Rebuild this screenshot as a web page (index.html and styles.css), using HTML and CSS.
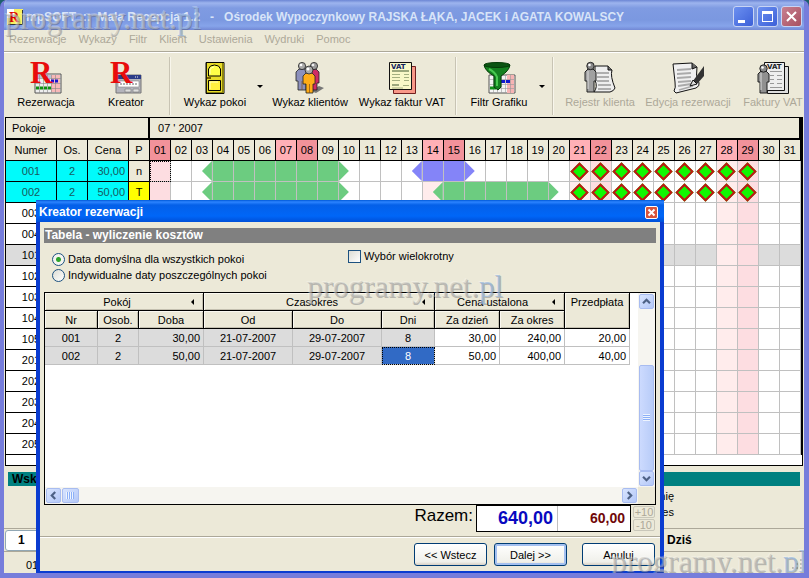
FILE: index.html
```html
<!DOCTYPE html>
<html lang="pl">
<head>
<meta charset="utf-8">
<title>mpSOFT :: Mała Recepcja 1.2</title>
<link rel="stylesheet" href="styles.css">
</head>
<body>
<div class="window">
  <header class="titlebar">
    <svg class="app-icon" viewBox="0 0 16 16" aria-hidden="true"><path d="M0 0h16v16H0z" fill="#f8f060"/><path d="M0 0h7v9H0z" fill="#fff"/><path d="M1 15.500h14.500V1" fill="none" stroke="#333"/><text x="2" y="13" class="r-small">R</text></svg>
    <h1>mpSOFT &nbsp;:: &nbsp;Mała Recepcja 1.2 &nbsp;&nbsp;- &nbsp;&nbsp;Ośrodek Wypoczynkowy RAJSKA ŁĄKA, JACEK i AGATA KOWALSCY</h1>
    <div class="window-buttons">
      <button type="button" aria-label="Minimalizuj"><svg viewBox="0 0 19 19"><path d="M4 13h7v3H4z" fill="#fff"/></svg></button>
      <button type="button" aria-label="Maksymalizuj"><svg viewBox="0 0 19 19"><path d="M4 4h11v11H4zM5 7v7h9V7z" fill="#fff" fill-rule="evenodd"/></svg></button>
      <button type="button" class="close" aria-label="Zamknij"><svg viewBox="0 0 19 19"><path d="M5 5l9 9M14 5l-9 9" stroke="#fff" stroke-width="2"/></svg></button>
    </div>
  </header>

  <nav class="menu">
    <a href="#">Rezerwacje</a><a href="#">Wykazy</a><a href="#">Filtr</a><a href="#">Klient</a><a href="#">Ustawienia</a><a href="#">Wydruki</a><a href="#">Pomoc</a>
  </nav>

  <div class="toolbar">
    <button type="button" class="tool w80">
      <svg viewBox="0 0 32 32"><path d="M5 12h26v19H5z" fill="#eee" stroke="#555"/><path d="M6 13h24v3H6z" fill="#b8c4d8"/><path d="M21 13h9v17h-9z" fill="#f8b8b8"/><path d="M5 16.500h26M5 21.500h26M5 26.500h26M9.500 13v18M13.500 13v18M17.500 13v18M21.500 13v18M25.500 13v18" stroke="#888" stroke-width=".6"/><path d="M17 19h11" stroke="#1414d0" stroke-width="3" stroke-dasharray="3 1"/><path d="M6 26h15" stroke="#109010" stroke-width="3" stroke-dasharray="3 1"/><text x="0" y="21" class="r-big">R</text></svg>
      <span>Rezerwacja</span></button>
    <button type="button" class="tool w80">
      <svg viewBox="0 0 32 32"><path d="M6 13h25v18H6z" fill="#b4b4bc" stroke="#777"/><path d="M6 13h25v4H6z" fill="#2c3c88"/><path d="M8 19h21v6H8z" fill="#fff" stroke="#888" stroke-width=".6"/><path d="M10 22h17" stroke="#666" stroke-dasharray="2 1"/><path d="M15 27h6v3h-6zM23 27h6v3h-6z" fill="#ddd" stroke="#777" stroke-width=".6"/><path d="M25 15h4" stroke="#f2f2f2" stroke-dasharray="1 1"/><text x="0" y="21" class="r-big">R</text></svg>
      <span>Kreator</span></button>
    <i class="split w8"></i>
    <button type="button" class="tool w82">
      <svg viewBox="0 0 32 32"><path d="M7 .500h18v31H7z" fill="#403c08" stroke="#000"/><path d="M8 1h15v29H8z" fill="#e8dc28"/><path d="M23 1h2v30H8v-1h15z" fill="#8c8410"/><path d="M9.500 14V7q1-4 6-4t6 4v7z" fill="#ffff48" stroke="#000"/><path d="M9.500 18.500h12v10h-12z" fill="#fff040" stroke="#000"/><path d="M11 12V8q1-3 4-3M11 27v-7h8" fill="none" stroke="#ffffc0"/><path d="M8 15h4v2H8z" fill="#745c00"/></svg>
      <span>Wykaz pokoi</span></button>
    <button type="button" class="drop w8" aria-label="Więcej: Wykaz pokoi"></button>
    <button type="button" class="tool w92">
      <svg viewBox="0 0 32 32"><path d="M17 29l8-5 5 2-8 5z" fill="#777"/><g stroke="#222" stroke-width=".8"><path d="M2 10l3-3h6l3 3v9h-2v9H4v-9H2z" fill="#8c90bc"/><path d="M15 10l3-3h4l3 3v11h-2v7h-7z" fill="#d02c64"/><path d="M9 14l3-3h6l3 3v8h-2v9h-7v-9H9z" fill="#ffac18"/><circle cx="8" cy="4" r="3.600" fill="#aaa"/><circle cx="20" cy="4" r="3.600" fill="#999"/><circle cx="15" cy="8" r="4" fill="#aaa"/></g><path d="M15.500 22v9M8 19v9" stroke="#805020" stroke-width=".7"/><circle cx="7" cy="3" r="1.300" fill="#fff"/><circle cx="19" cy="3" r="1.300" fill="#eee"/><circle cx="14" cy="7" r="1.500" fill="#fff"/></svg>
      <span>Wykaz klientów</span></button>
    <button type="button" class="tool w92">
      <svg viewBox="0 0 32 32"><path d="M7.500 4.500h22v27h-22z" fill="#f89888" stroke="#702020"/><path d="M3.500.500h22v27h-22z" fill="#f8f8c8" stroke="#111"/><text x="5" y="7" class="vat">VAT</text><path d="M6 9h17M6 23h7" stroke="#9ca87c" stroke-width="2"/><path d="M6 12.500h8M6 15.500h8M6 18.500h8M18 12.500h5M18 15.500h5M18 18.500h5M17 23.500h6M6 26h11" stroke="#a4b080"/></svg>
      <span>Wykaz faktur VAT</span></button>
    <i class="split w16"></i>
    <button type="button" class="tool w70">
      <svg viewBox="0 0 32 32"><path d="M6 13h26v18H6z" fill="#f4f4f4" stroke="#555"/><path d="M24 13h7v18h-7z" fill="#f8b4b4"/><path d="M6 17.500h25M6 22.500h25M6 26.500h25M10.500 13v18M14.500 13v18M18.500 13v18M22.500 13v18M27.500 13v18" stroke="#999" stroke-width=".6"/><path d="M18 19.500h10" stroke="#1018d0" stroke-width="3" stroke-dasharray="4 1"/><path d="M7 26h6" stroke="#109018" stroke-width="3"/><path d="M1 3q13 4 26 0-1 6-9 11v11l-3 3-4-3V14Q2 9 1 3z" fill="#148020" stroke="#053c08"/><ellipse cx="14" cy="3" rx="13" ry="2.500" fill="#0b5412" stroke="#053c08"/><path d="M6 7q6 3 8 8v9" fill="none" stroke="#48c850" stroke-width="2"/></svg>
      <span>Filtr Grafiku</span></button>
    <button type="button" class="drop w16" aria-label="Więcej: Filtr Grafiku"></button>
    <i class="split w6"></i>
    <button type="button" class="tool w88" disabled>
      <svg viewBox="0 0 32 32"><path d="M11 4h13l4 4q-2 6 3 18-1 3-5 4H10q4-5 1-12z" fill="#eee" stroke="#111"/><path d="M24 4v4h4" fill="#777" stroke="#111"/><path d="M13 11h12M13 15h12M13 19h12M14 23h13M14 27h13" stroke="#999" stroke-width="1.500"/><path d="M1 10l3-3h5l3 3v9h-2v11H3V19H1z" fill="#a0a0a0" stroke="#222"/><path d="M4 9v18" stroke="#ddd"/><circle cx="6.500" cy="4" r="3.700" fill="#888" stroke="#222"/><circle cx="5.500" cy="3" r="1.300" fill="#fff"/></svg>
      <span>Rejestr klienta</span></button>
    <button type="button" class="tool w88" disabled>
      <svg viewBox="0 0 32 32"><path d="M1 2l19-1 5 4q-2 9 2 16 1 3-3 5L4 31l-2-2q2-3 1-9z" fill="#f0f0f0" stroke="#111"/><path d="M20 1v6l5-2" fill="#666" stroke="#111"/><path d="M5 8l14-1M5 12l14-1M5 16l14-1M6 20l13-1M6 24l13-2M7 28l14-4" stroke="#aaa" stroke-width="1.800"/><path d="M32 4v10l-7 8-4-3z" fill="#333"/><path d="M21 18l4 4-7 2z" fill="#ddd" stroke="#111"/></svg>
      <span>Edycja rezerwacji</span></button>
    <button type="button" class="tool w82" disabled>
      <svg viewBox="0 0 32 32"><path d="M10.500 4.500h21v27h-21z" fill="#ddd" stroke="#111"/><path d="M7.500.500h20v28h-20z" fill="#eee" stroke="#111"/><text x="10" y="7" class="vat dim">VAT</text><path d="M13 9.500h12M13 13.500h4M20 13.500h5M13 17.500h4M20 17.500h5M13 21.500h4M20 21.500h5M13 25.500h12" stroke="#999"/><path d="M1 12l3-3h5l3 3v8h-2v11H3V20H1z" fill="#909090" stroke="#222"/><path d="M4 11v17" stroke="#ddd"/><circle cx="6.500" cy="6.500" r="3.700" fill="#888" stroke="#222"/><circle cx="5.500" cy="5.500" r="1.300" fill="#fff"/></svg>
      <span>Faktury VAT</span></button>
  </div>

  <main class="schedule">
    <table class="calendar">
      <colgroup id="cols"><col class="c-num"><col class="c-os"><col class="c-cena"><col class="c-p"></colgroup>
      <thead>
        <tr class="month"><th colspan="4">Pokoje</th><th colspan="31">07 ' 2007</th></tr>
        <tr class="days" id="days"><th>Numer</th><th>Os.</th><th>Cena</th><th>P</th></tr>
      </thead>
      <tbody id="rooms"></tbody>
    </table>
  </main>

  <section class="details">
    <h2>Wskazana rezerwacja</h2>
    <p>Imię</p>
    <p>Adres</p>
  </section>
  <div class="tabs"><button type="button" class="tab">1</button><strong>Dziś</strong></div>
  <div class="status"><span>01</span>
    <svg class="grip" viewBox="0 0 12 12" aria-hidden="true"><path d="M9 1h2v2H9zM5 5h2v2H5zM9 5h2v2H9zM1 9h2v2H1zM5 9h2v2H5zM9 9h2v2H9z" fill="#b8b4a2"/></svg>
  </div>

  <section class="dialog" role="dialog" aria-labelledby="dlg-title">
    <header class="dialog-title">
      <h2 id="dlg-title">Kreator rezerwacji</h2>
      <button type="button" class="dialog-close" aria-label="Zamknij"><svg viewBox="0 0 11 11"><path d="M2.500 2.500l6 6M8.500 2.500l-6 6" stroke="#fff" stroke-width="2"/></svg></button>
    </header>
    <div class="dialog-body">
      <h3>Tabela - wyliczenie kosztów</h3>
      <div class="options">
        <div class="radios">
          <label><input type="radio" name="tryb" checked>Data domyślna dla wszystkich pokoi</label>
          <label><input type="radio" name="tryb">Indywidualne daty poszczególnych pokoi</label>
        </div>
        <label class="multi"><input type="checkbox">Wybór wielokrotny</label>
      </div>
      <div class="sheet">
        <div class="sheet-view">
          <table class="costs">
            <colgroup><col class="k53"><col class="k41"><col class="k65"><col class="k89"><col class="k89"><col class="k53"><col class="k65"><col class="k65"><col class="k65"></colgroup>
            <thead>
              <tr><th colspan="3" class="group">Pokój</th><th colspan="3" class="group">Czasokres</th><th colspan="2" class="group">Cena ustalona</th><th rowspan="2" class="tall">Przedpłata</th></tr>
              <tr><th>Nr</th><th>Osob.</th><th>Doba</th><th>Od</th><th>Do</th><th>Dni</th><th>Za dzień</th><th>Za okres</th></tr>
            </thead>
            <tbody>
              <tr><td>001</td><td>2</td><td class="num">30,00</td><td>21-07-2007</td><td>29-07-2007</td><td>8</td><td class="num edit">30,00</td><td class="num edit">240,00</td><td class="num edit">20,00</td></tr>
              <tr><td>002</td><td>2</td><td class="num">50,00</td><td>21-07-2007</td><td>29-07-2007</td><td class="selected">8</td><td class="num edit">50,00</td><td class="num edit">400,00</td><td class="num edit">40,00</td></tr>
            </tbody>
          </table>
        </div>
        <div class="vbar">
          <button type="button" aria-label="W górę"><svg viewBox="0 0 15 15"><path d="M3.500 9.500l4-4 4 4"/></svg></button>
          <i class="thumb"></i>
          <button type="button" aria-label="W dół"><svg viewBox="0 0 15 15"><path d="M3.500 5.500l4 4 4-4"/></svg></button>
        </div>
        <div class="hbar">
          <button type="button" aria-label="W lewo"><svg viewBox="0 0 15 15"><path d="M9.500 3.500l-4 4 4 4"/></svg></button>
          <i class="thumb"></i>
          <button type="button" aria-label="W prawo"><svg viewBox="0 0 15 15"><path d="M5.500 3.500l4 4-4 4"/></svg></button>
        </div>
      </div>
      <div class="totals">
        <span class="total-label">Razem:</span>
        <div class="total-box"><output class="sum">640,00</output><output class="prepaid">60,00</output></div>
        <div class="steps"><button type="button" disabled>+10</button><button type="button" disabled>-10</button></div>
      </div>
    </div>
    <footer class="actions">
      <button type="button">&lt;&lt; Wstecz</button>
      <button type="button" class="default">Dalej &gt;&gt;</button>
      <button type="button" class="cancel">Anuluj</button>
    </footer>
  </section>

  <div class="mark mark-top" aria-hidden="true">programy.net.<b>pl</b></div>
  <div class="mark mark-mid" aria-hidden="true">programy.net.<b>pl</b></div>
  <div class="mark mark-end" aria-hidden="true">programy.net.<b>pl</b></div>
</div>
<script src="calendar.js"></script>
</body>
</html>
```
FILE: calendar.js
```js
const DAYS = 31;
const rooms = ['001', '002', '003', '004', '101', '102', '103', '104', '105', '201', '202', '203', '204', '205'];
const info = {
  '001': { os: '2', cena: '30,00', p: 'n' },
  '002': { os: '2', cena: '50,00', p: 'T' }
};
const stays = {
  '001': [{ from: 3, to: 10, kind: 'green' }, { from: 13, to: 16, kind: 'violet' }],
  '002': [{ from: 3, to: 10, kind: 'green' }, { from: 14, to: 20, kind: 'green' }]
};

// 1 July 2007 is a Sunday
const weekend = d => (d % 7 === 1 ? 'sun' : d % 7 === 0 ? 'sat' : '');
const pad = n => String(n).padStart(2, '0');

const cols = document.getElementById('cols');
const head = document.getElementById('days');
for (let d = 1; d <= DAYS; d++) {
  cols.append(document.createElement('col'));
  const th = document.createElement('th');
  th.textContent = pad(d);
  th.className = weekend(d);
  head.append(th);
}

function dayClass(room, d) {
  const names = [weekend(d)];
  for (const s of stays[room] || []) {
    if (d < s.from || d > s.to) continue;
    names.push(s.kind, d === s.from ? 'start' : d === s.to ? 'end' : 'full');
  }
  if (info[room] && d >= 21 && d <= 29) names.push('new');
  if (room === '001' && d === 1) names.push('focus');
  return names.join(' ').trim();
}

const body = document.getElementById('rooms');
for (const room of rooms) {
  const tr = document.createElement('tr');
  const i = info[room];
  if (i) tr.className = 'picked';
  if (room === '101') tr.className = 'shaded';
  const add = (text, cls) => {
    const td = document.createElement('td');
    td.textContent = text;
    td.className = cls;
    tr.append(td);
  };
  add(room, 'room');
  add(i ? i.os : '', 'room');
  add(i ? i.cena : '', 'room price');
  add(i ? i.p : '', i && i.p === 'T' ? 'state busy' : 'state');
  for (let d = 1; d <= DAYS; d++) add('', 'day ' + dayClass(room, d));
  body.append(tr);
}
```
FILE: styles.css
```css
*, *::before, *::after { box-sizing: border-box; }
body {
  margin: 0;
  background: #1d5f6c;
  font: 11px/14px "Liberation Sans", Arial, sans-serif;
  color: #000;
}
button { font: inherit; color: inherit; margin: 0; padding: 0; border: 0; background: none; }
h1, h2, h3, p { margin: 0; }
svg { display: block; }

.window {
  position: relative;
  display: flex;
  flex-direction: column;
  min-height: 100vh;
  overflow: hidden;
  background: #ece9d8;
  border: solid #767ddb;
  border-width: 0 5px 5px 4px;
  border-radius: 7px 7px 0 0;
}

/* title bar */
.titlebar {
  display: flex;
  align-items: center;
  height: 30px;
  margin: 0 -5px 0 -4px;
  padding: 3px 7px 0;
  background: linear-gradient(#6c86d4, #9db4ee 3px, #7f9be2 8px, #7b98e0 20px, #86a4ea 26px, #7288d4);
  color: #d8e4f8;
}
.app-icon { width: 16px; height: 16px; margin-right: 3px; }
.titlebar h1 { flex: 1; font-size: 12px; line-height: 16px; white-space: nowrap; }
.window-buttons { display: flex; gap: 3px; }
.window-buttons button {
  width: 21px;
  height: 21px;
  border: 1px solid #c8d4f4;
  border-radius: 3px;
  background: linear-gradient(135deg, #6c90f0, #3c60d8);
}
.window-buttons .close { background: linear-gradient(135deg, #c88090, #a85060); }

.r-small { font: bold 14px "Liberation Serif", serif; fill: #e00000; }
.r-big { font: bold 31px "Liberation Serif", serif; fill: #e80c0c; }
.vat { font: bold 7px "DejaVu Sans", sans-serif; fill: #102060; }
.vat.dim { fill: #222; }

/* menu */
.menu {
  display: flex;
  gap: 12px;
  height: 22px;
  padding: 2px 5px;
  border-bottom: 1px solid #aca899;
  box-shadow: 0 1px #fff;
}
.menu a { color: #aca899; text-decoration: none; line-height: 15px; }

/* toolbar */
.toolbar { display: flex; height: 65px; padding: 5px 0 2px 2px; overflow: hidden; }
.toolbar > * { flex: none; }
.tool { display: flex; flex-direction: column; align-items: center; gap: 1px; padding-top: 5px; white-space: nowrap; }
.tool svg { width: 32px; height: 32px; overflow: visible; }
.tool:disabled { color: #aca899; }
.split::before {
  content: "";
  display: block;
  width: 2px;
  height: 58px;
  margin: 0 auto;
  border-left: 1px solid #c8c4b4;
  border-right: 1px solid #f8f6ec;
}
.drop::before {
  content: "";
  display: block;
  width: 6px;
  margin: 0 auto;
  border: 3px solid transparent;
  border-top-color: #000;
  border-bottom: 0;
}
.w6 { width: 6px; } .w8 { width: 8px; } .w16 { width: 16px; } .w70 { width: 70px; }
.w80 { width: 80px; } .w82 { width: 82px; } .w88 { width: 88px; } .w92 { width: 92px; }

/* room calendar */
.schedule {
  margin: 0 1px;
  padding-bottom: 10px;
  background: #fff;
  border: 1px solid #000;
}
.calendar { width: 100%; border-collapse: separate; border-spacing: 0; table-layout: fixed; border-right: 1px solid #000; }
.calendar th, .calendar td { height: 21px; padding: 0; font-weight: normal; text-align: center; line-height: 14px; }
.c-num { width: 51px; } .c-os { width: 31px; } .c-cena { width: 41px; } .c-p { width: 21px; }
.calendar th { background: #ece9d8; border-right: 1px solid #000; border-bottom: 1px solid #000; }
.calendar .month th { height: 22px; padding-left: 6px; text-align: left; border-bottom-width: 2px; }
.calendar .month th:first-child { border-right-width: 2px; }
.calendar .month th:last-child { padding-left: 8px; border-right-width: 2px; }
.calendar .days .sat { background: #ffb0b6; }
.calendar .days .sun { background: #f2929a; }
.calendar .room, .calendar .state { border-right: 1px solid #000; border-bottom: 1px solid #000; }
.picked .room { background: #00fbfb; color: #175a60; }
.picked .price { padding-right: 3px; text-align: right; }
.picked .state { background: #ece9d8; }
.picked .busy { background: #ff0; }
.day { border-right: 1px solid #c0c0c0; border-bottom: 1px solid #c0c0c0; }
.day.sat { background: #ffecec; }
.day.sun { background: #fddde1; }
.shaded td { background: #dcdcdc; }
.day.green { --bar: #6ccc80; }
.day.violet { --bar: #8484f8; }
.day.full { background: var(--bar); }
.start::before, .end::before { content: ""; display: block; width: 50%; height: 20px; background: var(--bar); }
.start::before { margin-left: 50%; clip-path: polygon(100% 0, 100% 100%, 0 50%); }
.end::before { clip-path: polygon(0 0, 100% 50%, 0 100%); }
.new::before {
  content: "";
  display: block;
  width: 13px;
  height: 13px;
  margin: 0 auto;
  background: #10f800;
  border: 2px solid #c01414;
  transform: rotate(45deg);
}
.focus { outline: 1px dotted #000; outline-offset: -1px; }

/* strips under the calendar */
.details { height: 63px; padding: 6px 4px 0; border-bottom: 1px solid #aca899; }
.details h2 { height: 14px; margin-bottom: 2px; padding-left: 4px; background: #008080; font-size: 12px; line-height: 14px; }
.details p { width: 666px; line-height: 16px; text-align: right; }
.tabs {
  display: flex;
  align-items: center;
  height: 23px;
  border-bottom: 1px solid #aca899;
}
.tab { width: 630px; height: 21px; margin-left: 1px; padding-left: 12px; border: 1px solid #91a7b4; border-radius: 3px; background: #fff; font-weight: bold; font-size: 12px; text-align: left; }
.tabs strong { margin-left: 32px; font-size: 12px; }
.status { display: flex; justify-content: space-between; padding: 6px 1px 0 22px; }
.grip { width: 12px; height: 12px; }

/* wizard dialog */
.dialog {
  position: absolute;
  top: 200px;
  left: 32px;
  right: 140px;
  background: #ece9d8;
  border: solid #0a3cd0;
  border-width: 0 4px 4px;
}
.dialog-title {
  display: flex;
  align-items: center;
  justify-content: space-between;
  height: 22px;
  margin: 0 -4px;
  padding: 2px 6px 0 3px;
  background: linear-gradient(#0058d8, #2c84ff 2px, #0460e8 5px, #0066f8 16px, #0050d8);
  color: #fff;
}
.dialog-title h2 { font-size: 12px; line-height: 18px; }
.dialog-close { width: 13px; height: 13px; border: 1px solid #fff; border-radius: 2px; background: #d8543c; }
.dialog-body { padding: 6px 4px 0; }
.dialog h3 { height: 15px; padding-left: 1px; background: #808080; color: #fff; font-size: 12px; line-height: 15px; }
.options { display: flex; align-items: flex-start; gap: 80px; height: 49px; padding: 8px 0 0 8px; }
.options label { display: flex; align-items: center; gap: 3px; height: 16px; white-space: nowrap; }
.options input { appearance: none; width: 13px; height: 13px; margin: 0; border: 1px solid #1c5180; background: linear-gradient(135deg, #dcdcd4, #fff); }
.options input[type="radio"] { border-radius: 50%; }
.options input[type="radio"]:checked { background: radial-gradient(circle, #2ca42c 2px, #f4f4f0 3px); }
.radios { width: 216px; }
.multi { margin-top: -3px; }

.sheet {
  display: grid;
  grid-template-columns: 1fr 17px;
  grid-template-rows: 194px 17px;
  border: 1px solid #000;
  background: #ece9d8;
}
.sheet-view { background: #fff; overflow: hidden; }
.costs { width: 585px; border-collapse: separate; border-spacing: 0; table-layout: fixed; }
.k41 { width: 41px; } .k53 { width: 53px; } .k65 { width: 65px; } .k89 { width: 89px; }
.costs th, .costs td { height: 18px; padding: 0; font-weight: normal; text-align: center; line-height: 14px; }
.costs th { border-right: 1px solid #000; border-bottom: 1px solid #000; background: #ece9d8; box-shadow: inset 1px 1px #faf8f0, inset -1px -1px #c4c0b0; }
.costs .group { position: relative; padding-right: 14px; }
.costs .group::after {
  content: "";
  position: absolute;
  top: 6px;
  right: 9px;
  border: 3px solid transparent;
  border-left: 0;
  border-right-color: #000;
}
.costs .tall { vertical-align: top; padding-top: 2px; }
.costs td { background: #dcdcdc; border-right: 1px solid #c0c0c0; border-bottom: 1px solid #c0c0c0; }
.costs .num { padding-right: 3px; text-align: right; }
.costs .edit { background: #fff; }
.costs .selected { background: #316ac5; color: #fff; outline: 1px dotted #000; outline-offset: -1px; }

.vbar, .hbar { display: flex; background: #f6f5f0; padding: 1px; }
.vbar { flex-direction: column; }
.vbar button, .hbar button, .thumb { border: 1px solid #a8bcf0; border-radius: 2px; background: linear-gradient(135deg, #d8e4fe, #b4c8f8); }
.vbar button, .hbar button { width: 15px; height: 15px; }
.vbar svg, .hbar svg { width: 13px; height: 13px; fill: none; stroke: #4d6185; stroke-width: 2.5; }
.vbar .thumb { height: 106px; margin-top: auto; background: linear-gradient(90deg, #ccdafe, #b8ccf8); }
.hbar .thumb { width: 17px; margin: 0 auto 0 1px; }
.thumb::before { content: ""; display: block; }
.vbar .thumb::before { width: 7px; height: 7px; margin: 48px 3px; background: repeating-linear-gradient(#eef4fe 0 1px, #8cb0f8 1px 2px); }
.hbar .thumb::before { width: 8px; height: 7px; margin: 3px; background: repeating-linear-gradient(90deg, #eef4fe 0 1px, #8cb0f8 1px 2px); }

.totals { display: flex; justify-content: flex-end; height: 31px; padding-right: 1px; }
.total-label { margin-right: 3px; font-size: 17px; line-height: 22px; }
.total-box { display: flex; width: 155px; height: 27px; border: 1px solid #000; background: #fff; }
.total-box output { text-align: right; font-weight: bold; line-height: 24px; }
.sum { width: 81px; padding-right: 4px; border-right: 1px solid #c0c0c0; font-size: 18px; color: #0808c0; }
.prepaid { flex: 1; padding-right: 5px; font-size: 14px; color: #700808; }
.steps { display: flex; flex-direction: column; gap: 1px; width: 24px; padding: 1px 0 0 2px; }
.steps button { height: 12px; border: 1px solid #c9c7ba; border-radius: 2px; color: #aca899; line-height: 10px; }

.actions {
  display: flex;
  justify-content: flex-end;
  gap: 7px;
  padding: 6px 5px 5px;
  border-top: 1px solid #aca899;
  box-shadow: inset 0 1px #fff;
}
.actions button { width: 73px; height: 23px; border: 1px solid #003c74; border-radius: 3px; background: linear-gradient(#fff, #f0f0ea 85%, #d8d0c4); }
.actions .default { box-shadow: inset 0 0 0 2px #a4c0f0; }
.actions .cancel { margin-left: 8px; }

/* photo marks */
.mark {
  position: absolute;
  font: 31px/34px "Liberation Serif", serif;
  color: rgba(190, 190, 186, .5);
  text-shadow: 1px 1px 0 rgba(80, 80, 90, .35), -1px -1px 0 rgba(255, 255, 255, .25);
  pointer-events: none;
}
.mark b { font-weight: normal; color: rgba(150, 182, 222, .7); }
.mark-top { top: 2px; left: 1px; }
.mark-mid { top: 270px; left: 303px; }
.mark-end { right: -3px; bottom: -6px; }
```
